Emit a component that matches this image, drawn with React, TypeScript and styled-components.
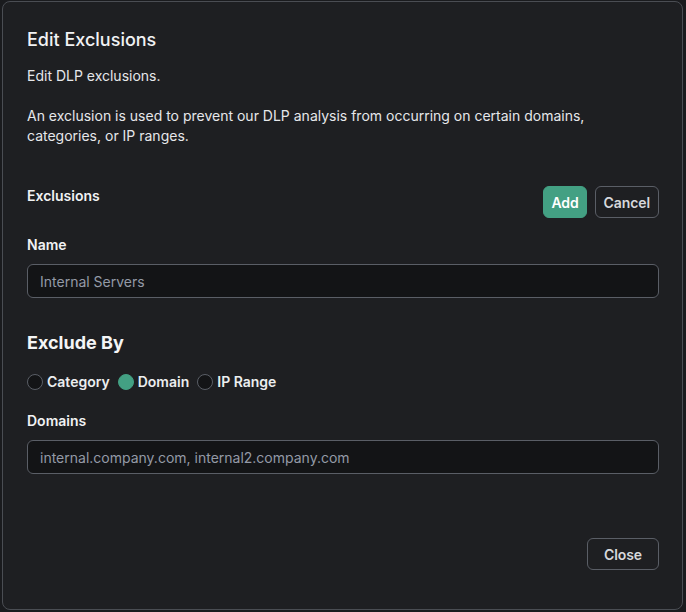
import React, { useState } from "react";
import styled, { createGlobalStyle } from "styled-components";

const GlobalStyle = createGlobalStyle`
  html, body {
    margin: 0;
    padding: 0;
    background: #1a1b1e;
    font-family: Inter, "Noto Sans", sans-serif;
    -webkit-font-smoothing: antialiased;
  }
  * { box-sizing: border-box; }
`;

const Modal = styled.div`
  margin: 1px 3px 0 2px;
  height: 609px;
  background: #1e1f22;
  border: 1px solid #4a4d53;
  border-radius: 8px;
  padding: 24px 23px 39px 24px;
  display: flex;
  flex-direction: column;
  color: #e9eaec;
`;

const Title = styled.h2`
  margin: 0;
  font-size: 18px;
  line-height: 28px;
  font-weight: 500;
  color: #f1f2f4;
`;

const Text = styled.p<{ $gap?: number }>`
  margin: ${(p) => p.$gap ?? 0}px 0 0;
  font-size: 14px;
  line-height: 20px;
  color: #e6e7ea;
`;

const HeaderRow = styled.div`
  margin-top: 40px;
  display: flex;
  align-items: flex-start;
  justify-content: space-between;
`;

const Label = styled.div<{ $gap?: number }>`
  margin-top: ${(p) => p.$gap ?? 0}px;
  font-size: 14px;
  line-height: 20px;
  font-weight: 600;
  color: #f1f2f4;
`;

const Actions = styled.div`
  display: flex;
  gap: 8px;
`;

const Button = styled.button<{ $primary?: boolean; $pad?: number }>`
  height: 32px;
  padding: 0 ${(p) => p.$pad ?? 10}px;
  border-radius: 6px;
  font-family: inherit;
  font-size: 14px;
  font-weight: 600;
  letter-spacing: -0.1px;
  cursor: pointer;
  background: ${(p) => (p.$primary ? "#43a083" : "transparent")};
  color: ${(p) => (p.$primary ? "#ffffff" : "#d6d8dc")};
  border: 1px solid ${(p) => (p.$primary ? "#43a083" : "#5a5e66")};
`;

const Input = styled.input`
  margin-top: 9px;
  width: 100%;
  height: 34px;
  padding: 0 12px;
  background: #131416;
  border: 1px solid #5a5e66;
  border-radius: 6px;
  font-family: inherit;
  font-size: 14px;
  color: #949aa6;
  outline: none;
`;

const SectionTitle = styled.h3`
  margin: 31px 0 0;
  font-size: 18px;
  line-height: 28px;
  font-weight: 700;
  color: #f4f5f6;
`;

const RadioGroup = styled.div`
  margin-top: 15px;
  display: flex;
  align-items: center;
  gap: 8px;
`;

const RadioOption = styled.label`
  display: flex;
  align-items: center;
  gap: 4px;
  font-size: 14px;
  line-height: 20px;
  font-weight: 600;
  color: #eceef0;
  cursor: pointer;
`;

const RadioDot = styled.span<{ $checked: boolean }>`
  width: 16px;
  height: 16px;
  border-radius: 50%;
  border: 1px solid ${(p) => (p.$checked ? "#43a083" : "#5a5e66")};
  background: ${(p) => (p.$checked ? "#43a083" : "#131416")};
`;

const Spacer = styled.div`
  flex: 1;
`;

const Footer = styled.div`
  display: flex;
  justify-content: flex-end;
`;

const options = ["Category", "Domain", "IP Range"];

export default function App() {
  const [mode, setMode] = useState("Domain");
  return (
    <>
      <GlobalStyle />
      <Modal>
        <Title>Edit Exclusions</Title>
        <Text $gap={12}>Edit DLP exclusions.</Text>
        <Text $gap={20}>
          An exclusion is used to prevent our DLP analysis from occurring on certain domains,
          categories, or IP ranges.
        </Text>
        <HeaderRow>
          <Label>Exclusions</Label>
          <Actions>
            <Button $primary $pad={7}>Add</Button>
            <Button $pad={8}>Cancel</Button>
          </Actions>
        </HeaderRow>
        <Label $gap={17}>Name</Label>
        <Input defaultValue="Internal Servers" />
        <SectionTitle>Exclude By</SectionTitle>
        <RadioGroup>
          {options.map((o) => (
            <RadioOption key={o} onClick={() => setMode(o)}>
              <RadioDot $checked={mode === o} />
              {o}
            </RadioOption>
          ))}
        </RadioGroup>
        <Label $gap={19}>Domains</Label>
        <Input defaultValue="internal.company.com, internal2.company.com" />
        <Spacer />
        <Footer>
          <Button $pad={16}>Close</Button>
        </Footer>
      </Modal>
    </>
  );
}
